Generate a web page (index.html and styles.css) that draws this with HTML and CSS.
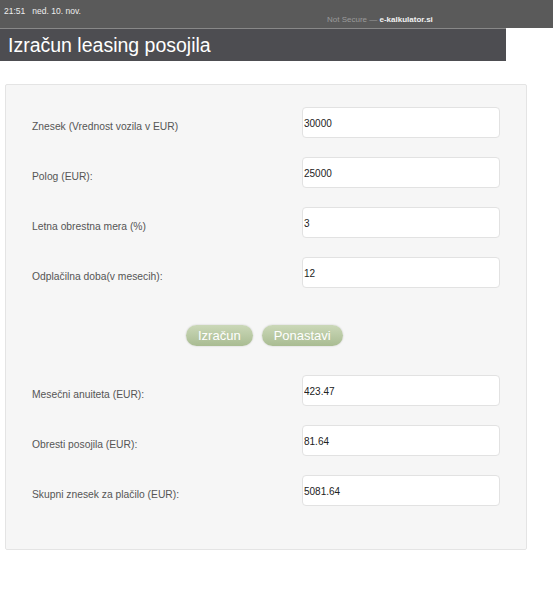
FILE: index.html
```html
<!DOCTYPE html>
<html>
<head>
    <title>Izračun leasing posojila</title>
    <link rel="stylesheet" href="styles.css">
</head>
<body>
    <div class="statusbar">
        <div class="clock">21:51&nbsp;&nbsp; ned. 10. nov.</div>
        <div class="address">Not Secure — <b>e-kalkulator.si</b></div>
    </div>
    <h1 class="title">Izračun leasing posojila</h1>

    <div class="card">
        <div class="rows">
            <label class="label">Znesek (Vrednost vozila v EUR)</label>
            <input class="field" type="text" value="30000">
            <label class="label">Polog (EUR):</label>
            <input class="field" type="text" value="25000">
            <label class="label">Letna obrestna mera (%)</label>
            <input class="field" type="text" value="3">
            <label class="label">Odplačilna doba(v mesecih):</label>
            <input class="field" type="text" value="12">
        </div>

        <div class="buttons">
            <button class="btn">Izračun</button>
            <button class="btn">Ponastavi</button>
        </div>

        <div class="rows">
            <label class="label">Mesečni anuiteta (EUR):</label>
            <input class="field" type="text" value="423.47">
            <label class="label">Obresti posojila (EUR):</label>
            <input class="field" type="text" value="81.64">
            <label class="label">Skupni znesek za plačilo (EUR):</label>
            <input class="field" type="text" value="5081.64">
        </div>
    </div>
</body>
</html>
```

FILE: styles.css
```css
body {
    margin: 0;
    font-family: "Liberation Sans", Arial, sans-serif;
    background: #fff;
    color: #444;
}
.statusbar {
    background: #5a5a5a;
    height: 28px;
    position: relative;
    font-size: 8.5px;
    color: #eee;
}
.clock {
    padding: 6px 0 0 4px;
}
.address {
    position: absolute;
    left: 327px;
    top: 15px;
    font-size: 8px;
    color: #9a9a9a;
}
.address b {
    color: #f2f2f2;
}
.title {
    margin: 0;
    width: 506px;
    height: 33px;
    padding-left: 8px;
    background: #4d4d51;
    border-top: 1px solid #888;
    color: #fff;
    font-size: 19.5px;
    font-weight: normal;
    line-height: 33px;
    box-sizing: border-box;
}
.card {
    margin: 23px 0 0 5px;
    width: 522px;
    box-sizing: border-box;
    background: #f6f6f6;
    border: 1px solid #e4e4e4;
    border-radius: 2px;
    padding: 22px 0 43px 26px;
}
.rows {
    display: grid;
    grid-template-columns: 270px 198px;
    row-gap: 19px;
}
.label {
    font-size: 10.3px;
    color: #555;
    padding-top: 14px;
}
.field {
    height: 31px;
    box-sizing: border-box;
    border: 1px solid #e2e2e2;
    border-radius: 4px;
    background: #fff;
    padding: 1px 1px 0;
    font-family: "Liberation Sans", Arial, sans-serif;
    font-size: 10px;
    color: #222;
}
.buttons {
    display: flex;
    gap: 9px;
    padding-left: 154px;
    margin: 37px 0 29px;
}
.btn {
    height: 21px;
    padding: 0 12px;
    border: none;
    border-radius: 11px;
    background: linear-gradient(#cbd8b8, #a9bc92);
    box-shadow: 0 0 2px rgba(0, 0, 0, 0.2);
    color: #fff;
    font-family: "Liberation Sans", Arial, sans-serif;
    font-size: 13px;
}
```
